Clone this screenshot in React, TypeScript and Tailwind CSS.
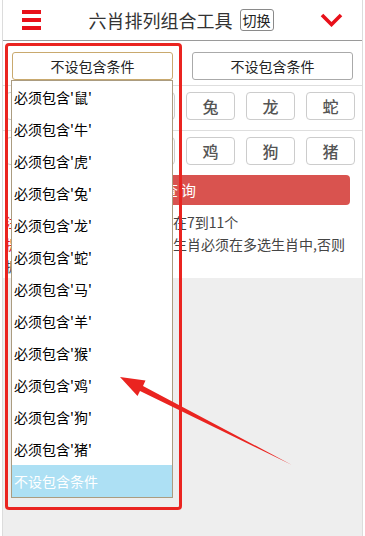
import React from 'react'

const font = "font-['Noto_Sans_CJK_SC','Liberation_Sans',sans-serif]"

const zodiac = [
  ['鼠', '牛', '虎', '兔', '龙', '蛇'],
  ['马', '羊', '猴', '鸡', '狗', '猪'],
]

const options = ['鼠', '牛', '虎', '兔', '龙', '蛇', '马', '羊', '猴', '鸡', '狗', '猪']

export default function App() {
  return (
    <div className={`relative h-[536px] w-[365px] overflow-hidden bg-white ${font}`}>
      <div className="mx-[2px] flex h-full flex-col border-x border-[#dcdcdc] bg-[#eeeeee]">
        {/* header */}
        <header className="flex h-[41px] shrink-0 items-center justify-between border-b border-[#9a9a9a] bg-white pl-[19px] pr-[19px]">
          <svg width="20" height="20" viewBox="0 0 20 20">
            <rect x="0" y="0" width="19" height="4" fill="#e8101a" />
            <rect x="0" y="8" width="19" height="4" fill="#e8101a" />
            <rect x="0" y="16" width="19" height="4" fill="#e8101a" />
          </svg>
          <div className="flex items-center">
            <span className="text-[18px] leading-none text-[#333]">六肖排列组合工具</span>
            <span className="ml-[7px] flex h-[22px] items-center rounded-[3px] border border-[#8a8a8a] px-[2px] text-[14px] leading-none text-[#222]">
              切换
            </span>
          </div>
          <svg width="23" height="14" viewBox="0 0 23 14">
            <path d="M2 2 L11.5 11.5 L21 2" fill="none" stroke="#e8101a" strokeWidth="3.6" />
          </svg>
        </header>

        {/* content */}
        <div className="bg-white pb-[1px]">
          <div className="flex justify-between border-b border-[#dedede] pb-[5px] pl-[9px] pr-[9px] pt-[11px]">
            <div className="flex h-[28px] w-[161px] items-center justify-center rounded-[3px] border border-[#c9a96e] text-[14px] text-[#222]">
              不设包含条件
            </div>
            <div className="flex h-[28px] w-[161px] items-center justify-center rounded-[3px] border border-[#aaaaaa] text-[14px] text-[#222]">
              不设包含条件
            </div>
          </div>

          {zodiac.map((row, i) => (
            <div
              key={i}
              className={`flex gap-[11px] pl-[3px] pt-[6px] ${i === 0 ? 'border-b border-[#dedede] pb-[10px]' : ''}`}
            >
              {row.map((z) => (
                <div
                  key={z}
                  className="flex h-[28px] w-[49px] items-center justify-center rounded-[4px] border border-[#cccccc] text-[16px] font-medium text-[#555]"
                >
                  {z}
                </div>
              ))}
            </div>
          ))}

          <div className="ml-[9px] mt-[10px] flex h-[30px] w-[338px] items-center justify-center rounded-[4px] bg-[#d9534f] text-[15px] tracking-[3px] text-white">
            查询
          </div>

          <div className="mt-[6px] pl-[2px] pr-[4px] text-[14px] leading-[22px] text-[#444]">
            <p className="whitespace-nowrap">
              <span className="text-[#e01515]">注意：</span>多选生肖的个数必须在7到11个
            </p>
            <p className="whitespace-nowrap">
              <span className="text-[#e01515]">提示：</span>设置包含条件所选的生肖必须在多选生肖中,否则
            </p>
            <p>据此条件将查询不到结果</p>
          </div>
        </div>
      </div>

      {/* open select list */}
      <ul className="absolute left-[11px] top-[80px] w-[162px] border border-[#ab9c80] bg-white text-[14px] text-black">
        {options.map((o) => (
          <li key={o} className="flex h-[32px] items-center pl-[2px]">
            必须包含'{o}'
          </li>
        ))}
        <li className="flex h-[32px] items-center bg-[#ade0f4] pl-[2px] text-white">不设包含条件</li>
      </ul>

      {/* annotation box */}
      <div className="absolute left-[5px] top-[43px] h-[467px] w-[177px] rounded-[4px] border-[3px] border-[#ea2420]" />

      {/* annotation arrow */}
      <svg className="absolute left-0 top-0" width="365" height="536" viewBox="0 0 365 536">
        <polygon
          points="120,377 145.5,380.5 143,386 292,465 140,391 137.5,396"
          fill="#ea2420"
        />
      </svg>
    </div>
  )
}
